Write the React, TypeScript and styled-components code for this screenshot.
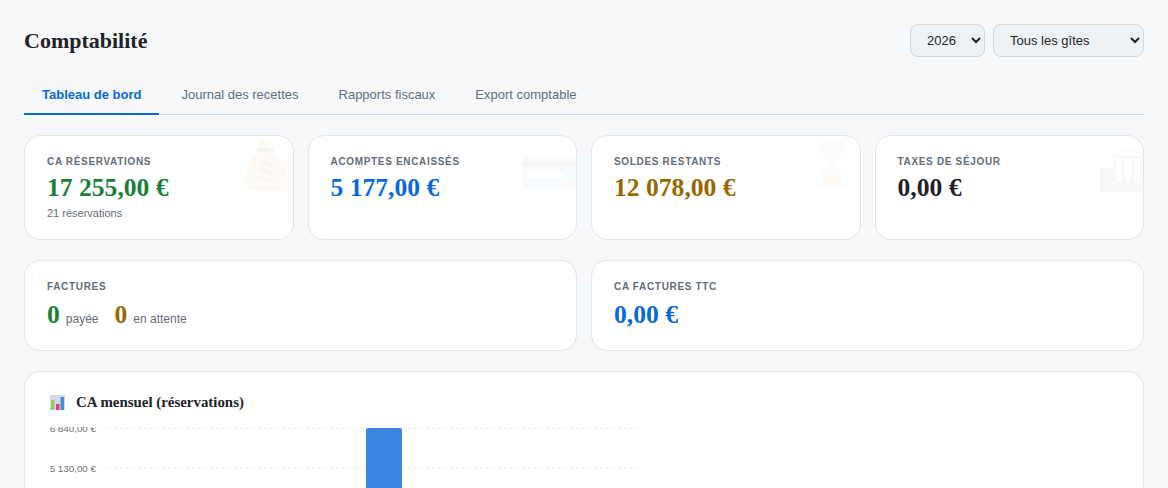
import React from "react";
import styled, { createGlobalStyle } from "styled-components";

const GlobalStyle = createGlobalStyle`
html, body {
  margin: 0;
  height: 488px;
  overflow: hidden;
  background: #f6f8fa;
  font-family: "Liberation Sans", Arial, sans-serif;
  color: #1f2328;
}
* { box-sizing: border-box; }
`;

const Page = styled.div`
  padding: 24px;
`;

const Header = styled.header`
  display: flex;
  justify-content: space-between;
  align-items: center;
  height: 33px;
  margin-bottom: 21px;
`;

const Title = styled.h1`
  margin: 0;
  font-family: "Liberation Serif", "Times New Roman", serif;
  font-size: 22px;
  font-weight: 700;
`;

const Filters = styled.div`
  display: flex;
  gap: 8px;
`;

const Select = styled.select<{ $width: number }>`
  width: ${(p) => p.$width}px;
  height: 33px;
  padding: 0 12px;
  font-family: "Liberation Sans", Arial, sans-serif;
  font-size: 13px;
  color: #1f2328;
  background-color: #eff2f5;
  border: 1px solid #d0d7de;
  border-radius: 8px;
`;

const Tabs = styled.nav`
  display: flex;
  gap: 4px;
  border-bottom: 1px solid #d0d7de;
  margin-bottom: 20px;
`;

const Tab = styled.button<{ $active?: boolean }>`
  padding: 0 18px 2px;
  height: 37px;
  margin-bottom: -1px;
  font-family: "Liberation Sans", Arial, sans-serif;
  font-size: 13px;
  font-weight: ${(p) => (p.$active ? 700 : 400)};
  color: ${(p) => (p.$active ? "#0969da" : "#656d76")};
  background: none;
  border: none;
  border-bottom: 2px solid ${(p) => (p.$active ? "#0969da" : "transparent")};
`;

const StatGrid = styled.section<{ $cols: number }>`
  display: grid;
  grid-template-columns: repeat(${(p) => p.$cols}, 1fr);
  gap: 14px;
  margin-bottom: 20px;
`;

const Card = styled.div<{ $height: number }>`
  position: relative;
  overflow: hidden;
  height: ${(p) => p.$height}px;
  padding: 20px 22px;
  background: #fff;
  border: 1px solid #e2e6ec;
  border-radius: 16px;
`;

const Label = styled.div`
  font-size: 10px;
  line-height: 11px;
  font-weight: 700;
  letter-spacing: 0.67px;
  text-transform: uppercase;
  color: #656d76;
`;

const Value = styled.div<{ $color: string; $gap?: number }>`
  margin-top: ${(p) => p.$gap ?? 5}px;
  font-family: "Liberation Serif", "Times New Roman", serif;
  font-size: 25.6px;
  line-height: 31px;
  font-weight: 700;
  color: ${(p) => p.$color};
`;

const Sub = styled.div`
  margin-top: 3px;
  font-size: 11px;
  line-height: 14px;
  color: #656d76;
`;

const Counts = styled.div`
  display: flex;
  align-items: baseline;
  gap: 16px;
  margin-top: 7px;
`;

const Count = styled.span`
  display: inline-flex;
  align-items: baseline;
  gap: 6px;
  font-size: 12px;
  color: #656d76;
`;

const CountNum = styled.b<{ $color: string }>`
  font-family: "Liberation Serif", "Times New Roman", serif;
  font-size: 25.6px;
  line-height: 31px;
  color: ${(p) => p.$color};
`;

const Ghost = styled.svg`
  position: absolute;
  top: 2px;
  right: 0;
  width: 56px;
  height: 56px;
  opacity: 0.055;
`;

const ChartCard = styled.section`
  height: 400px;
  padding: 21px 25px;
  background: #fff;
  border: 1px solid #e2e6ec;
  border-radius: 16px;
`;

const ChartTitle = styled.h3`
  display: flex;
  align-items: center;
  gap: 11px;
  margin: 0 0 16px;
  font-family: "Liberation Serif", "Times New Roman", serif;
  font-size: 14.9px;
  line-height: 18px;
  font-weight: 700;
`;

const ChartSvg = styled.svg`
  display: block;
  font-family: "Liberation Sans", Arial, sans-serif;
`;

const BagIcon = () => (
  <Ghost viewBox="0 0 56 56">
    <path d="M21 2h14l-3 8h-8z" fill="#d98a3a" />
    <rect x="20" y="10" width="16" height="4" fill="#5a3a1a" />
    <path d="M21 14h14c10 7 16 16 16 26 0 8-5 12-11 12H16C12 52 7 48 7 40c0-10 6-19 14-26z" fill="#e8913a" />
    <path d="M29 22v3m0 16v3m6-16c-1-3-11-4-12 1-1 6 12 3 12 9 0 5-11 4-13 0" fill="none" stroke="#7a4a1a" strokeWidth="3" />
  </Ghost>
);

const CardIcon = () => (
  <Ghost viewBox="0 0 56 56">
    <rect x="3" y="19" width="56" height="32" rx="3" fill="#7cc0f0" />
    <rect x="3" y="23" width="56" height="5" fill="#555" />
    <rect x="9" y="33" width="34" height="7" fill="#fff" />
    <circle cx="48" cy="45" r="3" fill="#f0b040" />
  </Ghost>
);

const HourglassIcon = () => (
  <Ghost viewBox="0 0 56 56">
    <rect x="10" y="0" width="36" height="2" fill="#c5ccd3" />
    <rect x="10" y="48" width="36" height="2" fill="#c5ccd3" />
    <path d="M13 2h30c0 10-8 17-12 23 4 6 12 13 12 23H13c0-10 8-17 12-23-4-6-12-13-12-23z" fill="#a8d8f0" />
    <path d="M17 9h22c-2 6-8 11-11 15-3-4-9-9-11-15zM16 47c1-6 8-11 12-13 4 2 11 7 12 13z" fill="#eeb066" />
  </Ghost>
);

const BankIcon = () => (
  <Ghost viewBox="0 0 56 56">
    <rect x="13" y="30" width="14" height="24" fill="#666" />
    <rect x="27" y="46" width="30" height="8" fill="#666" />
    <path d="M24 18l18-7 18 7z" fill="none" stroke="#666" strokeWidth="1" />
    <rect x="24" y="19" width="34" height="1" fill="#666" />
    <rect x="27" y="21" width="2" height="23" fill="#888" />
    <rect x="35" y="21" width="3" height="23" fill="#888" />
    <rect x="44" y="21" width="3" height="23" fill="#888" />
    <rect x="53" y="21" width="3" height="23" fill="#888" />
    <path d="M23 44h34v2H20z" fill="#999" />
  </Ghost>
);

const BarsEmoji = () => (
  <svg width="15" height="15" viewBox="0 0 15 15">
    <rect width="15" height="15" fill="#d8d8e0" />
    <rect x="1" y="5" width="3.5" height="10" fill="#8fd06a" />
    <rect x="6" y="9" width="3.5" height="6" fill="#e8387a" />
    <rect x="10.5" y="2" width="3.5" height="13" fill="#3d8fe0" />
  </svg>
);

const ticks = [
  { label: "6 840,00 €", y: 1.5 },
  { label: "5 130,00 €", y: 41 },
];

const MonthlyChart = () => (
  <ChartSvg width="600" height="200" viewBox="0 0 600 200">
    {ticks.map((t) => (
      <g key={t.label}>
        <text x="46" y={t.y + 3.5} fontSize="9.8" textAnchor="end" fill="#6e6e6e">
          {t.label}
        </text>
        <line x1="52" x2="589" y1={t.y} y2={t.y} stroke="#eceef1" strokeDasharray="3 3" />
      </g>
    ))}
    <path d="M316 164V3a2 2 0 0 1 2-2h32a2 2 0 0 1 2 2v161z" fill="#3a87e3" />
  </ChartSvg>
);

export default function App() {
  return (
    <Page>
      <GlobalStyle />
      <Header>
        <Title>Comptabilité</Title>
        <Filters>
          <Select $width={75} defaultValue="2026">
            <option>2026</option>
            <option>2025</option>
          </Select>
          <Select $width={151} defaultValue="Tous les gîtes">
            <option>Tous les gîtes</option>
          </Select>
        </Filters>
      </Header>

      <Tabs>
        <Tab $active>Tableau de bord</Tab>
        <Tab>Journal des recettes</Tab>
        <Tab>Rapports fiscaux</Tab>
        <Tab>Export comptable</Tab>
      </Tabs>

      <StatGrid $cols={4}>
        <Card $height={105}>
          <BagIcon />
          <Label>CA réservations</Label>
          <Value $color="#1a7f37">17 255,00 €</Value>
          <Sub>21 réservations</Sub>
        </Card>
        <Card $height={105}>
          <CardIcon />
          <Label>Acomptes encaissés</Label>
          <Value $color="#0969da">5 177,00 €</Value>
        </Card>
        <Card $height={105}>
          <HourglassIcon />
          <Label>Soldes restants</Label>
          <Value $color="#9a6700">12 078,00 €</Value>
        </Card>
        <Card $height={105}>
          <BankIcon />
          <Label>Taxes de séjour</Label>
          <Value $color="#1f2328">0,00 €</Value>
        </Card>
      </StatGrid>

      <StatGrid $cols={2}>
        <Card $height={91}>
          <Label>Factures</Label>
          <Counts>
            <Count>
              <CountNum $color="#1a7f37">0</CountNum> payée
            </Count>
            <Count>
              <CountNum $color="#9a6700">0</CountNum> en attente
            </Count>
          </Counts>
        </Card>
        <Card $height={91}>
          <Label>CA factures TTC</Label>
          <Value $color="#0969da" $gap={7}>
            0,00 €
          </Value>
        </Card>
      </StatGrid>

      <ChartCard>
        <ChartTitle>
          <BarsEmoji />
          CA mensuel (réservations)
        </ChartTitle>
        <MonthlyChart />
      </ChartCard>
    </Page>
  );
}
